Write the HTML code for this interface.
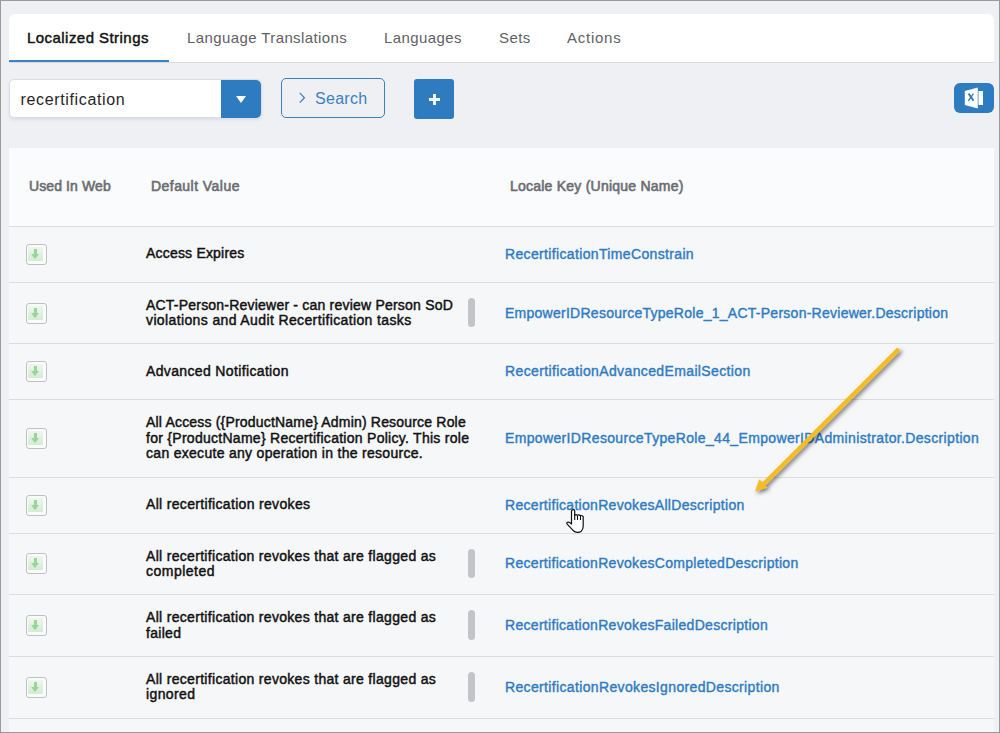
<!DOCTYPE html>
<html><head><meta charset="utf-8">
<style>
*{box-sizing:border-box;margin:0;padding:0}
html,body{width:1000px;height:733px;overflow:hidden}
body{background:#eff0f4;font-family:"Liberation Sans",sans-serif;position:relative;}
.frame{position:absolute;left:0;top:0;width:1000px;height:733px;border:1px solid #9a9a9a;pointer-events:none;z-index:50}
.tabs{position:absolute;left:9px;top:14px;width:985px;height:48px;background:#fff;border-radius:6px 6px 0 0;box-shadow:0 1px 0 #d9dadd}
.tab{position:absolute;top:0;height:48px;font-size:15px;color:#5f6166;line-height:48px;letter-spacing:0.4px}
.tab.active{color:#111;width:160px;-webkit-text-stroke:0.45px #111;letter-spacing:0.45px}
.tab.active:after{content:"";position:absolute;left:0;right:0;bottom:0;height:2px;background:#3a83c5}
.inp{position:absolute;left:9px;top:79px;width:253px;height:39px;background:#fff;border:1px solid #dcdde0;border-radius:5px;box-shadow:0 2px 3px rgba(150,170,200,.25)}
.inp span{position:absolute;left:10.5px;top:10.5px;font-size:16px;color:#262626;letter-spacing:0.65px}
.dd{position:absolute;left:221px;top:80px;width:40px;height:38px;background:#2f7bc0;border-radius:0 5px 5px 0}
.dd:after{content:"";position:absolute;left:15px;top:16px;border-left:5px solid transparent;border-right:5px solid transparent;border-top:7px solid #fff}
.sbtn{position:absolute;left:281px;top:78px;width:104px;height:40px;border:1px solid #3a80c3;border-radius:5px;color:#3a80c3;font-size:16px}
.pbtn{position:absolute;left:414px;top:79px;width:40px;height:40px;background:#2f7bc0;border-radius:3px}
.xbtn{position:absolute;left:954px;top:83px;width:40px;height:30px;background:#2f7bc0;border-radius:6px}
.table{position:absolute;left:9px;top:148px;width:985px;height:585px;background:#f6f7f9}
.thead{position:absolute;left:9px;top:148px;width:985px;height:78px;background:#fafbfc}
.hline{position:absolute;left:9px;width:985px;height:1px;background:#dcdcdc}
.th{position:absolute;font-size:14px;color:#6b6d72;-webkit-text-stroke:0.6px #6b6d72;letter-spacing:0.23px;line-height:15.5px}
.cb{position:absolute;left:26px;width:21px;height:21px;border:1px solid #c0c0c0;border-radius:3px;background:#fbfbfc}
.dv span{display:block;width:max-content}
.dv{position:absolute;left:146px;font-size:14px;color:#111;-webkit-text-stroke:0.45px #111;line-height:15.5px;letter-spacing:0.16px;white-space:nowrap}
.lk{position:absolute;left:505px;font-size:14px;color:#2f7bc2;-webkit-text-stroke:0.4px #2f7bc2;letter-spacing:0.3px;line-height:15.5px;white-space:nowrap}
.sc{position:absolute;left:468px;width:7px;background:#c2c4c7;border-radius:4px}
.cb i{position:absolute;left:1px;top:2px;width:15px;height:14px;background:linear-gradient(#eef7ee,#d3ecd3)}
.cb b{position:absolute;left:7px;top:4px;width:3px;height:6px;background:#9ad49a}
.cb b:after{content:"";position:absolute;left:-3px;top:5px;border-left:4.5px solid transparent;border-right:4.5px solid transparent;border-top:5px solid #9ad49a}
</style></head><body>
<div class="tabs">
  <div class="tab active" style="left:0;width:160px;padding-left:18px">Localized Strings</div>
  <div class="tab" style="left:178px">Language Translations</div>
  <div class="tab" style="left:375px">Languages</div>
  <div class="tab" style="left:490px">Sets</div>
  <div class="tab" style="left:558px;letter-spacing:0.75px">Actions</div>
</div>
<div class="inp"><span>recertification</span></div>
<div class="dd"></div>
<div class="sbtn"><svg style="position:absolute;left:16px;top:13px" width="9" height="13" viewBox="0 0 9 14"><path d="M1.5 1 L6.6 6.2 L1.5 11.4" fill="none" stroke="#3a80c3" stroke-width="1.3"/></svg><span style="position:absolute;left:33px;top:11px;letter-spacing:0.3px">Search</span></div>
<div class="pbtn"><svg style="position:absolute;left:13.5px;top:13.5px" width="13" height="13" viewBox="0 0 13 13"><path d="M6.5 1 V12 M1 6.5 H12" stroke="#fff" stroke-width="2.8"/></svg></div>
<div class="xbtn"><svg style="position:absolute;left:0;top:0" width="40" height="30" viewBox="0 0 40 30"><path d="M10.8 8 L23.8 4.6 L23.8 25.4 L10.8 22 Z" fill="#fff"/><rect x="23.8" y="8" width="1.2" height="14" fill="#9cc4e6"/><rect x="25" y="8" width="4" height="14" fill="#fff"/><path d="M14.6 10.6 L19.6 17.8" stroke="#2f7bc0" stroke-width="1.9"/><path d="M19.4 10.6 L14.4 17.9" stroke="#2f7bc0" stroke-width="1.3"/></svg></div>
<div class="table"></div><div class="thead"></div>
<div class="th" style="left:29px;top:178.6px;letter-spacing:0.1px">Used In Web</div>
<div class="th" style="left:151px;top:178.6px;letter-spacing:0.45px">Default Value</div>
<div class="th" style="left:510px;top:178.6px">Locale Key (Unique Name)</div>
<div class="hline" style="top:226px"></div>
<div class="hline" style="top:282px"></div>
<div class="hline" style="top:343px"></div>
<div class="hline" style="top:399px"></div>
<div class="hline" style="top:477px"></div>
<div class="hline" style="top:533px"></div>
<div class="hline" style="top:594px"></div>
<div class="hline" style="top:656px"></div>
<div class="hline" style="top:718px"></div>
<div class="cb" style="top:244px"><i></i><b></b></div>
<div class="dv" style="top:245.6px"><span style="letter-spacing:0.196px">Access Expires</span></div>
<div class="lk" style="top:246.8px;letter-spacing:0.35px">RecertificationTimeConstrain</div>
<div class="cb" style="top:303px"><i></i><b></b></div>
<div class="dv" style="top:297.9px;line-height:15px"><span style="letter-spacing:0.210px">ACT-Person-Reviewer - can review Person SoD</span><span style="letter-spacing:0.376px">violations and Audit Recertification tasks</span></div>
<div class="lk" style="top:306.2px;letter-spacing:0.26px">EmpowerIDResourceTypeRole_1_ACT-Person-Reviewer.Description</div>
<div class="sc" style="top:298px;height:29px"></div>
<div class="cb" style="top:361px"><i></i><b></b></div>
<div class="dv" style="top:363.6px"><span style="letter-spacing:0.355px">Advanced Notification</span></div>
<div class="lk" style="top:363.6px;letter-spacing:0.37px">RecertificationAdvancedEmailSection</div>
<div class="cb" style="top:428px"><i></i><b></b></div>
<div class="dv" style="top:415.1px"><span style="letter-spacing:0.188px">All Access ({ProductName} Admin) Resource Role</span><span style="letter-spacing:0.276px">for {ProductName} Recertification Policy. This role</span><span style="letter-spacing:0.295px">can execute any operation in the resource.</span></div>
<div class="lk" style="top:431.2px;letter-spacing:0.35px">EmpowerIDResourceTypeRole_44_EmpowerIDAdministrator.Description</div>
<div class="cb" style="top:495px"><i></i><b></b></div>
<div class="dv" style="top:496.8px"><span style="letter-spacing:0.322px">All recertification revokes</span></div>
<div class="lk" style="top:498px">RecertificationRevokesAllDescription</div>
<div class="cb" style="top:553px"><i></i><b></b></div>
<div class="dv" style="top:549.2px;line-height:15px"><span style="letter-spacing:0.311px">All recertification revokes that are flagged as</span><span style="letter-spacing:0.481px">completed</span></div>
<div class="lk" style="top:556px">RecertificationRevokesCompletedDescription</div>
<div class="sc" style="top:549px;height:29px"></div>
<div class="cb" style="top:615px"><i></i><b></b></div>
<div class="dv" style="top:610.2px;line-height:15.5px"><span style="letter-spacing:0.311px">All recertification revokes that are flagged as</span><span style="letter-spacing:0.300px">failed</span></div>
<div class="lk" style="top:618px">RecertificationRevokesFailedDescription</div>
<div class="sc" style="top:610px;height:30px"></div>
<div class="cb" style="top:677px"><i></i><b></b></div>
<div class="dv" style="top:672.2px;line-height:15px"><span style="letter-spacing:0.311px">All recertification revokes that are flagged as</span><span style="letter-spacing:0.370px">ignored</span></div>
<div class="lk" style="top:680px;letter-spacing:0.35px">RecertificationRevokesIgnoredDescription</div>
<div class="sc" style="top:672px;height:30px"></div>
<svg style="position:absolute;left:0;top:0;z-index:40" width="1000" height="733" viewBox="0 0 1000 733">
<defs><filter id="sh" x="-20%" y="-20%" width="140%" height="140%"><feDropShadow dx="2" dy="2" stdDeviation="2.1" flood-color="#000" flood-opacity="0.55"/></filter></defs>
<g filter="url(#sh)">
<path d="M898.8 349 L763.8 484" stroke="#f4bb20" stroke-width="4.3" fill="none"/>
<path d="M755 491.7 L759.3 479.3 L767.4 487.4 Z" fill="#f4bb20"/>
</g>
<g transform="translate(566,509)">
<path d="M5.5 15 L5.5 2 Q5.5 0.6 7.1 0.6 Q8.7 0.6 8.7 2 L8.7 6.3 Q9.8 5.2 11.3 6.2 Q12.8 5.4 14.4 6.6 Q16 6.2 17.2 7.6 L17.2 17 Q17.2 20.5 15.2 22.2 Q13.5 23.5 11 23.3 Q8.3 23.2 6.8 21.2 L1.2 15.2 Q0.3 14.2 1.1 13.4 Q2.2 12.6 3.6 13.6 Z" fill="#fff" stroke="#111" stroke-width="1.2" stroke-linejoin="round"/>
<path d="M8.7 6 V11 M11.5 6.3 V11 M14.5 6.8 V11" stroke="#111" stroke-width="1.1"/>
</g>
</svg>
<div class="frame"></div>
</body></html>
